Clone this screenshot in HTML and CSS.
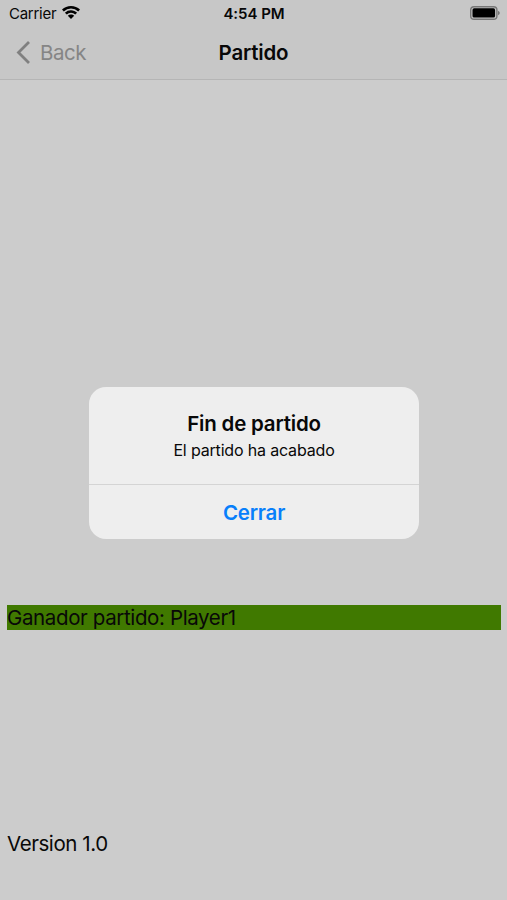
FILE: index.html
```html
<!DOCTYPE html>
<html lang="es">
<head>
<meta charset="utf-8">
<title>Partido</title>
<link rel="stylesheet" href="styles.css">
</head>
<body>
<div class="screen">
  <header class="top">
    <div class="status">
      <div class="carrier"><span class="carrier-name">Carrier</span>
        <svg class="wifi" width="18" height="13" viewBox="0 0 18 13"><path d="M9 0C12.5 0 15.7 1.4 18 3.6L16.2 5.4A10.3 10.3 0 0 0 1.8 5.4L0 3.6A13 13 0 0 1 9 0ZM9 4.3C11.3 4.3 13.5 5.2 15.1 6.7L13.2 8.5A6.1 6.1 0 0 0 4.8 8.5L2.9 6.7A8.8 8.8 0 0 1 9 4.3ZM9 8.5C10.2 8.5 11.4 9 12.2 9.8L9 13L5.8 9.8A4.6 4.6 0 0 1 9 8.5Z"/></svg>
      </div>
      <div class="time"><span>4:54 PM</span></div>
      <div class="power"><svg width="30" height="14" viewBox="0 0 30 14"><rect class="shell" x=".7" y=".7" width="26.2" height="12.6" rx="3.4"/><rect x="2.5" y="2.3" width="22.6" height="9.2" rx="1.6"/><path class="cap" d="M28 4.7Q29.8 5.4 29.8 7T28 9.3Z"/></svg></div>
    </div>
    <nav class="nav">
      <div class="back"><svg width="15" height="25" viewBox="0 0 15 25"><path d="M13 2L2.5 12.5L13 23"/></svg><span class="back-label">Back</span></div>
      <h1><span class="title">Partido</span></h1>
      <div></div>
    </nav>
  </header>
  <main class="content">
    <section class="dialog" role="dialog">
      <div class="message">
        <h2><span class="heading">Fin de partido</span></h2>
        <p><span class="detail">El partido ha acabado</span></p>
      </div>
      <button><span class="close">Cerrar</span></button>
    </section>
    <div class="winner"><span class="winner-text">Ganador partido: Player1</span></div>
    <footer><span class="version">Version 1.0</span></footer>
  </main>
</div>
</body>
</html>
```
FILE: styles.css
```css
* { box-sizing: border-box; }
body { margin: 0; font-family: Inter, sans-serif; color: #080808; background: #ccc; }
.screen { width: 507px; height: 900px; display: flex; flex-direction: column; }
.top { height: 80px; background: #c7c7c7; border-bottom: 1px solid #b5b5b5; }
.status { height: 27px; display: grid; grid-template-columns: 1fr 1fr 1fr; align-items: center; padding: 0 7px 0 9px; font-size: 15px; }
.carrier { display: flex; align-items: center; gap: 6px; }
.carrier-name { letter-spacing: -.27px; }
.wifi { margin-top: -2px; }
.time { text-align: center; font-weight: 600; letter-spacing: -.05px; margin-left: -1px; }
.power { display: flex; justify-content: flex-end; margin-top: -1px; }
.shell { fill: none; stroke: #777; stroke-width: 1.4; }
.cap { fill: #777; }
.nav { height: 50px; display: grid; grid-template-columns: 1fr 1fr 1fr; align-items: center; padding: 0 16px; }
.back { display: flex; align-items: center; gap: 9px; color: #858585; font-size: 20.5px; letter-spacing: -.5px; }
.back path { fill: none; stroke: #808080; stroke-width: 2.8; }
h1, h2, p { margin: 0; }
h1 { text-align: center; font-size: 20.5px; font-weight: 600; letter-spacing: -.2px; }
.content { flex: 1; display: flex; flex-direction: column; padding: 307px 6px 0 7px; }
.dialog { width: 330px; height: 152px; align-self: center; border-radius: 17px; background: #eee; overflow: hidden; display: flex; flex-direction: column; flex-shrink: 0; }
.message { height: 98px; padding-top: 24px; text-align: center; border-bottom: 1px solid #d4d4d4; }
h2 { font-size: 20.5px; line-height: 26px; font-weight: 600; letter-spacing: -.2px; }
p { font-size: 16px; line-height: 26px; letter-spacing: -.17px; }
button { height: 54px; border: 0; padding: 0; background: none; color: #087ffb; font: 600 20.5px Inter, sans-serif; letter-spacing: -.2px; }
.winner { height: 25px; margin-top: 66px; background: #407900; font-size: 20.5px; line-height: 26px; letter-spacing: -.37px; }
footer { margin-top: 201px; font-size: 20.5px; line-height: 26px; letter-spacing: -.43px; }
span { white-space: nowrap; }
```
